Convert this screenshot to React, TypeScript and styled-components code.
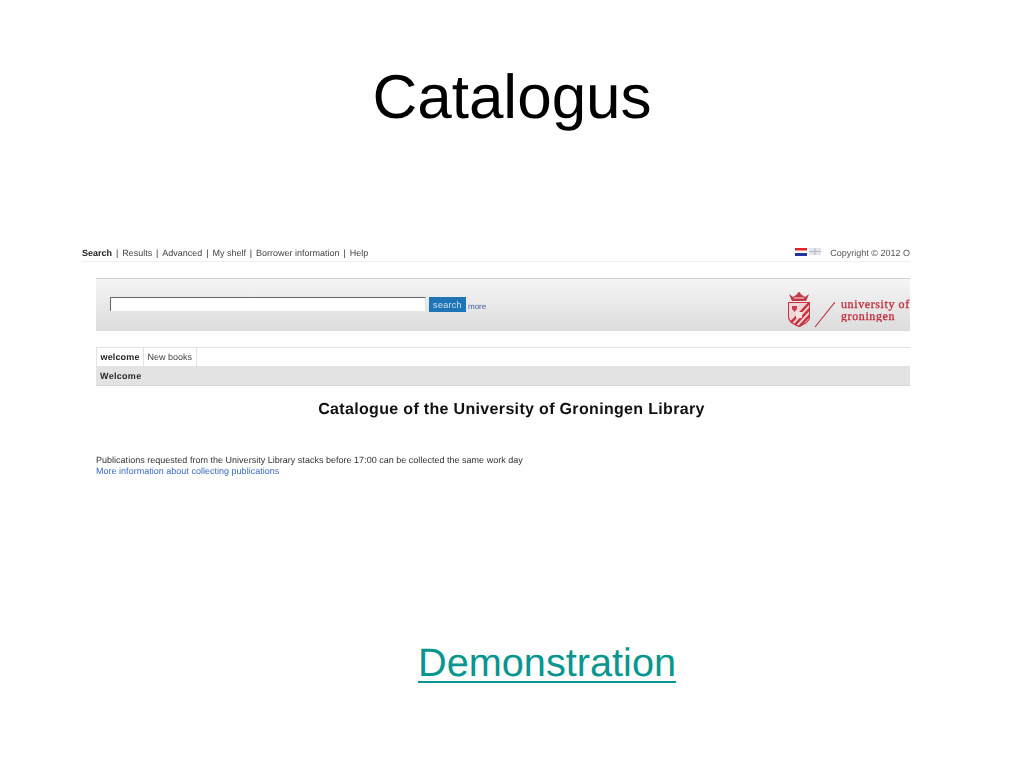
import styled, { createGlobalStyle } from "styled-components";

const GlobalStyle = createGlobalStyle`
  html, body { margin: 0; padding: 0; background: #fff; }
  body { font-family: "Liberation Sans", Arial, sans-serif; text-rendering: geometricPrecision; }
`;

const Slide = styled.div`
  width: 1024px;
  height: 768px;
  display: flex;
  flex-direction: column;
  overflow: hidden;
  background: #fff;
`;

const Title = styled.h1`
  margin: 62px 0 0;
  height: 72px;
  font-size: 62px;
  line-height: 72px;
  font-weight: 400;
  text-align: center;
  color: #000;
`;

const Shot = styled.div`
  margin: 111px 0 0 82px;
  width: 828px;
  height: 240px;
  overflow: hidden;
  color: #333;
  font-size: 9px;
  filter: blur(0.25px);
`;

const TopBar = styled.div`
  height: 16px;
  display: flex;
  align-items: center;
  justify-content: space-between;
  border-bottom: 1px solid #f0f0f0;
  white-space: nowrap;
`;

const TopNav = styled.nav`
  display: flex;
`;

const NavItem = styled.span<{ $active?: boolean }>`
  font-weight: ${(p) => (p.$active ? 700 : 400)};
  color: ${(p) => (p.$active ? "#222" : "#444")};
  &:not(:last-child)::after {
    content: "|";
    font-weight: 400;
    margin: 0 3.9px;
    color: #333;
  }
`;

const TopRight = styled.div`
  display: flex;
  align-items: center;
  color: #555;
`;

const Flags = styled.svg`
  width: 26px;
  height: 8px;
  margin: -3px 9px 0 0;
`;

const Page = styled.div`
  margin-left: 14px;
`;

const SearchBand = styled.div`
  margin-top: 16px;
  height: 52px;
  display: flex;
  align-items: flex-start;
  justify-content: space-between;
  border-top: 1px solid #cfcfcf;
  background: linear-gradient(#f5f5f5, #dcdcdc);
  overflow: hidden;
`;

const SearchForm = styled.form`
  display: flex;
  align-items: flex-start;
  margin: 18px 0 0 14px;
`;

const SearchInput = styled.div`
  box-sizing: border-box;
  width: 316px;
  height: 14px;
  background: #fff;
  border-top: 1px solid #666;
  border-left: 1px solid #666;
  border-right: 1px solid #e4e4e4;
`;

const SearchButton = styled.button`
  width: 37px;
  height: 15px;
  margin-left: 3px;
  padding: 0;
  border: 0;
  background: #1f74b5;
  color: #cfe2f1;
  font: 9px "Liberation Sans", Arial, sans-serif;
  letter-spacing: 0.3px;
`;

const MoreLink = styled.a`
  margin: 5px 0 0 2px;
  font-size: 8px;
  color: #3f63a8;
`;

const Logo = styled.div`
  display: flex;
  align-items: center;
  margin-top: 13px;
`;

const LogoMark = styled.svg`
  width: 48px;
  height: 36px;
  margin-right: 6px;
`;

const WordMark = styled.div`
  width: 69px;
  overflow: hidden;
  white-space: nowrap;
  font-family: "Liberation Serif", "Times New Roman", serif;
  font-size: 12px;
  line-height: 12px;
  letter-spacing: 0.6px;
  color: #bd2f3e;
  -webkit-text-stroke: 0.3px #bd2f3e;
`;

const Tabs = styled.div`
  margin-top: 16px;
  height: 18px;
  display: flex;
  border-top: 1px solid #e2e2e2;
`;

const Tab = styled.div<{ $active?: boolean }>`
  display: flex;
  align-items: center;
  padding: 0 ${(p) => (p.$active ? "3.5px" : "3.5px")};
  border-right: 1px solid #e2e2e2;
  border-left: ${(p) => (p.$active ? "1px solid #e2e2e2" : "0")};
  font-weight: ${(p) => (p.$active ? 700 : 400)};
  color: ${(p) => (p.$active ? "#222" : "#444")};
  letter-spacing: ${(p) => (p.$active ? "0.15px" : "0")};
`;

const SectionBar = styled.div`
  height: 19px;
  line-height: 20px;
  padding-left: 4px;
  background: #e3e3e3;
  border-bottom: 1px solid #d4d4d4;
  font-weight: 700;
  color: #2a2a2a;
  letter-spacing: 0.3px;
`;

const Heading = styled.h2`
  width: 831px;
  margin: 15px 0 0;
  font-size: 16px;
  line-height: 18px;
  font-weight: 700;
  text-align: center;
  color: #111;
  letter-spacing: 0.33px;
  white-space: nowrap;
`;

const Notice = styled.p`
  margin: 36px 0 0;
  font-size: 9px;
  line-height: 11px;
  color: #333;
  letter-spacing: 0.015px;
`;

const NoticeLink = styled.a`
  display: block;
  color: #3a6cc0;
`;

const Demo = styled.a`
  margin: 155px 0 0 418px;
  font-size: 39.7px;
  line-height: 46px;
  color: #0a9690;
  text-decoration: underline;
  text-decoration-thickness: 2px;
  text-underline-offset: 5px;
`;

export default function App() {
  return (
    <Slide>
      <GlobalStyle />
      <Title>Catalogus</Title>
      <Shot>
        <TopBar>
          <TopNav>
            <NavItem $active>Search</NavItem>
            <NavItem>Results</NavItem>
            <NavItem>Advanced</NavItem>
            <NavItem>My shelf</NavItem>
            <NavItem>Borrower information</NavItem>
            <NavItem>Help</NavItem>
          </TopNav>
          <TopRight>
            <Flags viewBox="0 0 26 8">
              <rect x="0" y="0" width="12" height="2.5" fill="#e0262c" />
              <rect x="0" y="5" width="12" height="3" fill="#2335a0" />
              <rect x="14" y="0" width="12" height="7" fill="#e2e4ea" />
              <path d="M20 0v7M14 3.5h12" stroke="#b4b9c6" strokeWidth="1" />
            </Flags>
            Copyright © 2012 O
          </TopRight>
        </TopBar>
        <Page>
          <SearchBand>
            <SearchForm>
              <SearchInput />
              <SearchButton type="button">search</SearchButton>
              <MoreLink>more</MoreLink>
            </SearchForm>
            <Logo>
              <LogoMark viewBox="0 0 48 36">
                <defs>
                  <clipPath id="shield">
                    <path d="M1 10h22v15c0 5-6 8-11 10C7 33 1 30 1 25z" />
                  </clipPath>
                </defs>
                {/* kroon */}
                <path d="M2 2l4 3 3-2 3-2 3 2 3 2 4-3-2 5-1 2H5L4 7z" fill="#c23a46" />
                <path d="M7 6h10" stroke="#f3dcde" strokeWidth="1" />
                <circle cx="12" cy="1.5" r="1.5" fill="#c23a46" />
                {/* schild */}
                <path d="M1 10h22v15c0 5-6 8-11 10C7 33 1 30 1 25z" fill="#f1d3d6" />
                <g clipPath="url(#shield)" stroke="#c8323f" fill="none">
                  <path d="M11 36L36 9M5 36L30 9M-1 36L24 9" strokeWidth="2.4" />
                  <path d="M1 10h22v15c0 5-6 8-11 10C7 33 1 30 1 25z" strokeWidth="2" />
                </g>
                <rect x="3" y="12" width="9" height="9" fill="#efd9db" />
                <path d="M5 14h5v3l-2.500 3L5 17z" fill="#c8404c" />
                <rect x="9" y="20" width="6" height="6" fill="#efe3e4" />
                <path d="M28 35L48 10" stroke="#b9323f" strokeWidth="1.1" fill="none" />
              </LogoMark>
              <WordMark>
                university of
                <br />
                groningen
              </WordMark>
            </Logo>
          </SearchBand>
          <Tabs>
            <Tab $active>welcome</Tab>
            <Tab>New books</Tab>
          </Tabs>
          <SectionBar>Welcome</SectionBar>
          <Heading>Catalogue of the University of Groningen Library</Heading>
          <Notice>
            Publications requested from the University Library stacks before 17:00 can be collected the same work day
            <NoticeLink>More information about collecting publications</NoticeLink>
          </Notice>
        </Page>
      </Shot>
      <Demo>Demonstration</Demo>
    </Slide>
  );
}
